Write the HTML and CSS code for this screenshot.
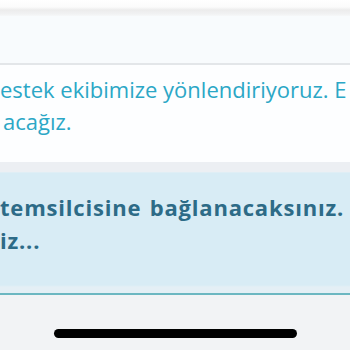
FILE: index.html
```html
<!DOCTYPE html>
<html lang="tr">
<head>
<meta charset="utf-8">
<link rel="stylesheet" href="styles.css">
</head>
<body>
<div class="screen">
  <div class="top"></div>
  <div class="card-head"></div>
  <div class="card-body">
    <p class="info"><span class="line">estek ekibimize yönlendiriyoruz. E</span><span class="line indent">acağız.</span></p>
  </div>
  <div class="gap"></div>
  <div class="notice">
    <p class="notice-text"><span class="line">temsilcisine bağlanacaksınız.</span><span class="line">iz...</span></p>
  </div>
  <div class="footer">
    <div class="home-bar"></div>
  </div>
</div>
</body>
</html>
```

FILE: styles.css
```css
* { box-sizing: border-box; }
html, body { margin: 0; padding: 0; }
body {
  width: 350px;
  height: 350px;
  overflow: hidden;
  font-family: "Open Sans", "Noto Sans", sans-serif;
  background: #f2f3f5;
}
.screen {
  display: flex;
  flex-direction: column;
  height: 350px;
}
.top {
  height: 16px;
  background: linear-gradient(#ffffff 0, #fbfbfb 7px, #ececec 10px, #f1f2f3 14px, #f6f8f9 16px);
}
.card-head {
  height: 49px;
  background: #f8fbfd;
  border-bottom: 2px solid #e3e6e9;
}
.card-body {
  height: 97px;
  background: #fdfeff;
  padding-top: 8px;
}
.info {
  margin: 0;
  font-size: 22px;
  line-height: 32px;
  color: #2ba7c6;
}
.line {
  display: block;
  white-space: nowrap;
  overflow: hidden;
}
.indent { padding-left: 3px; }
.gap {
  height: 10px;
  background: #eceff3;
}
.notice {
  height: 123px;
  background: linear-gradient(#d8ecf5 0, #d8ecf5 112px, #e4eff5 114px, #e4eff5 121px);
  border-top: 1px solid #dfeef5;
  border-bottom: 2px solid #6cb7c1;
  padding-top: 18px;
}
.notice-text {
  margin: 0;
  font-size: 22px;
  font-weight: 700;
  line-height: 33px;
  letter-spacing: 0.8px;
  word-spacing: 2px;
  color: #2d6b87;
}
.footer {
  flex: 1;
  background: #f2f3f5;
  display: flex;
  justify-content: center;
  padding-top: 34px;
}
.home-bar {
  width: 243px;
  height: 9px;
  border-radius: 5px;
  background: #000;
}
```
